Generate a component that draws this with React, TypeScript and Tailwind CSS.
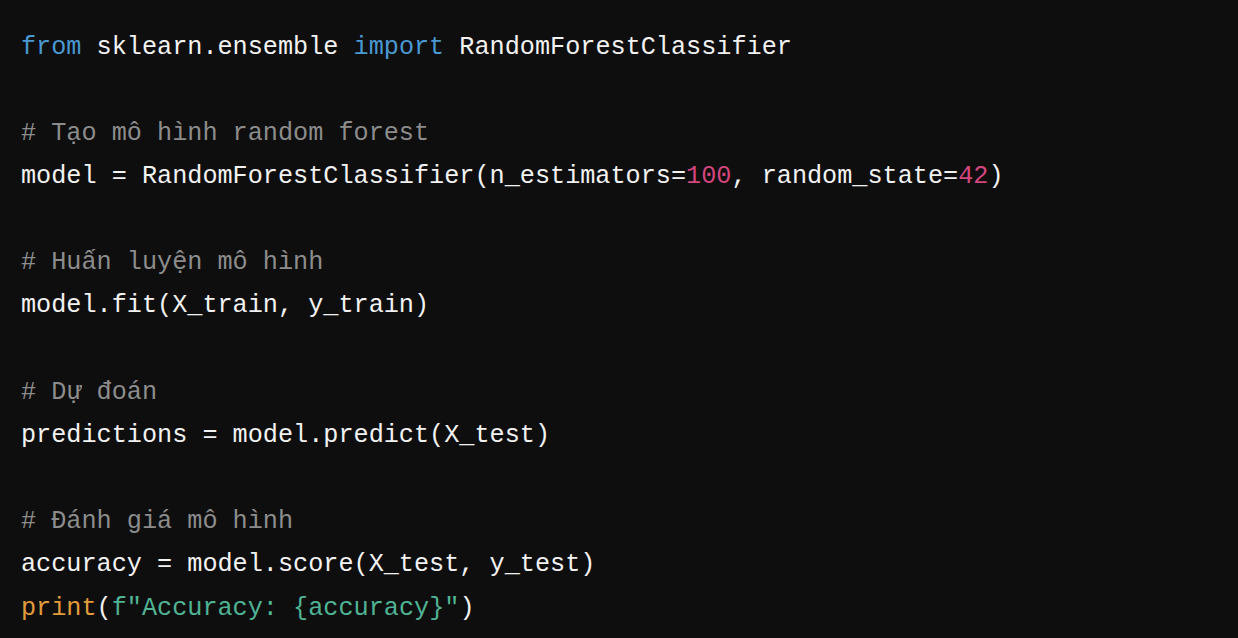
import React from "react";

const C = {
  kw: "text-[#4a98d2]",
  cm: "text-[#8c8c8c]",
  num: "text-[#d3457d]",
  bi: "text-[#e29b3c]",
  str: "text-[#50b394]",
};

export default function App() {
  return (
    <div className="w-[1238px] h-[638px] bg-[#0e0e0e] overflow-hidden">
      <pre
        className="m-0 pt-[25.5px] pl-[21px] text-[25.2px] leading-[43.15px] text-[#f2f2f2] whitespace-pre"
        style={{ fontFamily: '"Liberation Mono", "DejaVu Sans Mono", monospace' }}
      >
        <code>
          <span className={C.kw}>from</span> sklearn.ensemble <span className={C.kw}>import</span> RandomForestClassifier
          {"\n\n"}
          <span className={C.cm}># Tạo mô hình random forest</span>
          {"\n"}model = RandomForestClassifier(n_estimators=<span className={C.num}>100</span>, random_state=<span className={C.num}>42</span>)
          {"\n\n"}
          <span className={C.cm}># Huấn luyện mô hình</span>
          {"\n"}model.fit(X_train, y_train)
          {"\n\n"}
          <span className={C.cm}># Dự đoán</span>
          {"\n"}predictions = model.predict(X_test)
          {"\n\n"}
          <span className={C.cm}># Đánh giá mô hình</span>
          {"\n"}accuracy = model.score(X_test, y_test)
          {"\n"}
          <span className={C.bi}>print</span>(<span className={C.str}>f"Accuracy: {"{"}accuracy{"}"}"</span>)
        </code>
      </pre>
    </div>
  );
}
